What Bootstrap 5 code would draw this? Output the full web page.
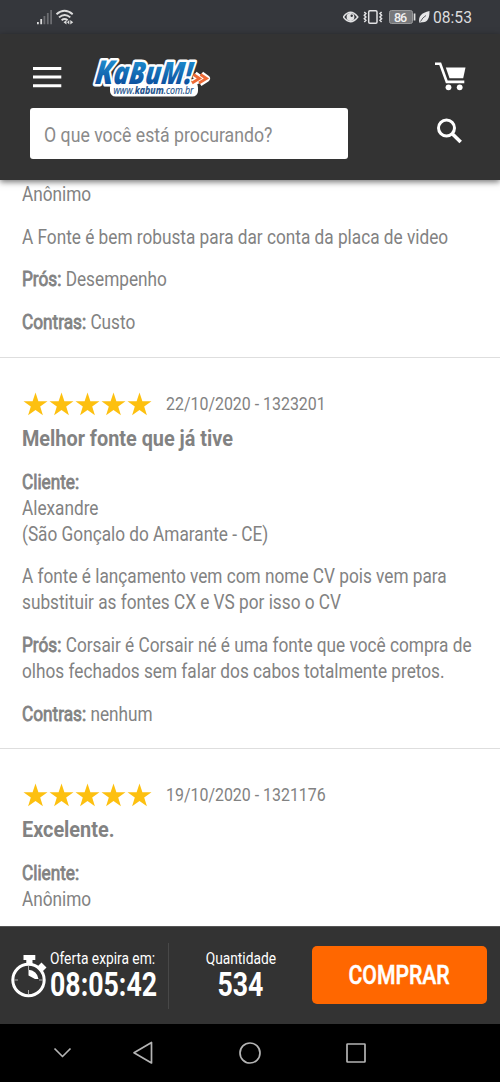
<!DOCTYPE html>
<html lang="pt-BR">
<head>
<meta charset="utf-8">
<meta name="viewport" content="width=device-width, initial-scale=1">
<title>KaBuM!</title>
<link href="https://cdn.jsdelivr.net/npm/bootstrap@5.3.0/dist/css/bootstrap.min.css" rel="stylesheet">
<style>
  body { height: 1082px; overflow: hidden; background: #fff; color: #828282; font: 400 20px/26px Roboto, sans-serif; }
  svg { display: block; flex: none; }
  /* narrow text: regular Roboto squeezed horizontally */
  .cond { display: block; white-space: nowrap; width: max-content; transform: scaleX(var(--k, .861)); transform-origin: 0 50%; }
  .cond-mid { transform-origin: 50% 50%; }
  .status-bar { height: 34px; background: #35373c; color: #dcdcde; padding: 0 29px 0 36px; }
  .clock { --k: .92; font-size: 17px; margin: 0 -4px 0 -2px; }
  .site-head { height: 146px; background: #333; padding: 20px 34px 0 30px; box-shadow: 0 2px 6px rgba(0,0,0,.55); z-index: 2; }
  .brand { margin: -10px 0 0 23px; }
  .find-row { margin-top: 6px; }
  .find-box { --k: .885; width: 318px; height: 51px; background: #fff; border-radius: 3px; padding: 2px 14px 0; color: #8a8a8a; }
  .reviews { height: 746px; overflow: hidden; }
  .review { padding: 33px 23px 21.500px 22px; border-bottom: 1px solid #dedede; }
  .review p { margin: 0 0 16.600px; }
  .review p:last-child { margin-bottom: 0; }
  .review b { font-weight: 400; -webkit-text-stroke: .8px #828282; }
  .review h2 { --k: .902; font-size: 22px; font-weight: 700; line-height: 28px; margin: 8.300px 0 15.900px; }
  .review-first { padding-top: 1.300px; }
  .stars { fill: #fdc010; }
  .date { font-size: 18.500px; margin-left: 13px; }
  .buy-bar { height: 98px; background: #333; color: #fff; border-top: 1px solid #555; }
  .offer { width: 169px; height: 66px; border-right: 1px solid #484848; padding-left: 10px; }
  .offer-text { margin-left: 2px; width: 106px; }
  .stock { width: 143px; }
  .tag-line { font-size: 16px; line-height: 22px; margin-top: -3px; }
  .big-num { --k: .81; font-size: 33px; line-height: 30px; font-weight: 700; }
  .buy-btn { --k: .815; width: 175px; height: 58px; background: #ff6700; border-radius: 5px; border: 0; color: #fff; font-size: 26px; font-weight: 500; padding: 0; -webkit-text-stroke: .5px #fff; margin-top: -1px; }
  .sys-nav { height: 58px; background: #000; }
</style>
</head>
<body class="d-flex flex-column">
<div class="status-bar d-flex align-items-center">
  <svg width="40" height="18" viewBox="36 8 40 18">
    <path fill="#ddd" d="M37 22h1.800v2.200H37zM40.300 19h1.800v5.200h-1.800z"/>
    <path fill="#6c6d71" d="M43.500 16h1.800v8.200h-1.800zM46.900 13h1.800v11.200h-1.800zM50.200 10h1.800v14.200h-1.800z"/>
    <g fill="none" stroke="#ddd" stroke-width="1.900"><path d="M56.500 14.300q8-7 16.200 0M59 17.400q5.700-5 11.300 0M61.600 20.200q3-2.400 6 0"/></g>
    <path fill="#ddd" d="M66.500 20v4.600l-3-2.300zM67 22.300l2.300-2.300v4.600zM70.300 20l2.900 2.300-2.900 2.300z"/>
  </svg>
  <svg class="ms-auto" width="92" height="18" viewBox="343 8 92 18">
    <path fill="none" stroke="#e2e2e4" stroke-width="1.500" d="M343.300 17q7.200-9.500 14.500 0q-7.300 9.500-14.500 0z"/>
    <circle cx="350.500" cy="17" r="3.900" fill="#e2e2e4"/><circle cx="351.700" cy="15.800" r="1.200" fill="#35373c"/>
    <rect x="368.700" y="10.700" width="8.300" height="12.600" rx="1.200" fill="none" stroke="#e2e2e4" stroke-width="1.500"/>
    <path fill="none" stroke="#e2e2e4" stroke-width="1.500" d="M364.300 12l1.600 1.600-1.600 1.700 1.600 1.700-1.600 1.700 1.600 1.600-1.600 1.700M381.600 12l-1.600 1.600 1.600 1.700-1.600 1.700 1.600 1.700-1.600 1.600 1.600 1.700"/>
    <rect x="389.500" y="10.500" width="23" height="13" rx="2" fill="#77787b" stroke="#98999b"/>
    <rect x="413.700" y="13.500" width="1.700" height="7" fill="#ddd"/>
    <text x="394" y="21.500" font-family="Roboto" font-weight="500" font-size="12.500" fill="#f2f2f2" textLength="13">86</text>
    <path fill="#e6e6e8" d="M429.500 11c.2 7-2 11.800-7.500 11.200l-2.600.6c-1.500-6 2-10.200 10.100-11.800z"/>
    <path stroke="#35373c" stroke-width=".8" fill="none" d="M420.500 21.500q2-4 5.500-6"/>
  </svg>
  <span class="cond clock">08:53</span>
</div>

<header class="site-head position-relative">
  <div class="d-flex align-items-start">
    <svg width="34" height="48" viewBox="30 54 34 48"><path fill="#fff" d="M33 67h28.300v3H33zM33 75.500h28.300v3H33zM33 84.200h28.300v3H33z"/></svg>
    <svg class="brand" width="125" height="58" viewBox="87 44 125 58">
      <defs><linearGradient id="blue" x1="0" y1="0" x2="0" y2="1"><stop offset=".2" stop-color="#1f92d2"/><stop offset=".8" stop-color="#0d519f"/></linearGradient></defs>
      <rect x="110" y="82" width="88" height="14.500" rx="5.500" fill="#fff"/>
      <g fill="none" stroke="#fff" stroke-width="7" stroke-linejoin="round"><path d="M194.500 74.500l5.500 4-7 4.500M201 74.500l5.500 4-7 4.500"/></g>
      <g transform="translate(94.500 83.500) skewX(-6)" font-family="Open Sans" font-weight="800" font-style="italic" stroke-linejoin="round">
        <text x="0" y="0" font-size="31" textLength="97" lengthAdjust="spacingAndGlyphs" fill="url(#blue)" stroke="#fff" stroke-width="5" paint-order="stroke"><tspan font-size="33">K</tspan>aBuM!</text>
      </g>
      <g fill="none" stroke="#ee6a35" stroke-width="2.800"><path d="M193.500 74.500l6 4-7.500 4.500M200.500 74.500l6 4-7.500 4.500"/></g>
      <text x="113.500" y="93.800" font-family="Open Sans" font-style="italic" font-size="10" fill="#20508a" stroke="#20508a" stroke-width=".15" textLength="80" lengthAdjust="spacingAndGlyphs">www.<tspan font-weight="700">kabum</tspan>.com.br</text>
    </svg>
    <svg class="ms-auto" width="34" height="40" viewBox="432 54 34 40">
      <path fill="none" stroke="#fff" stroke-width="2.600" d="M435 63.700h5.200l6.600 18.200h17.500"/>
      <path fill="#fff" d="M445.800 67.500h19.700l-2.300 10.800h-13.700z"/>
      <g fill="#fff"><circle cx="448.500" cy="87.300" r="2.900"/><circle cx="459.700" cy="87.300" r="2.900"/></g>
    </svg>
  </div>
  <div class="find-row d-flex">
    <div class="find-box d-flex align-items-center"><span class="cond">O que você está procurando?</span></div>
    <svg class="ms-auto" width="32" height="40" viewBox="434 107 32 40"><g fill="none" stroke="#fff" stroke-width="3"><circle cx="446.500" cy="127" r="8"/><path stroke-width="3.600" d="M452.500 133l8.200 8"/></g></svg>
  </div>
</header>

<main class="reviews">
  <article class="review review-first">
    <p><span class="cond">Anônimo</span></p>
    <p><span class="cond">A Fonte é bem robusta para dar conta da placa de video</span></p>
    <p><span class="cond"><b>Prós:</b> Desempenho</span></p>
    <p><span class="cond"><b>Contras:</b> Custo</span></p>
  </article>
  <article class="review">
    <div class="d-flex align-items-center">
      <svg class="stars" width="131" height="26" viewBox="0 0 131 26"><defs><path id="st" d="M0-12l2.900 8.700h9.100l-7.300 5.400 2.700 8.700-7.400-5.300-7.400 5.300 2.700-8.700-7.300-5.400h9.100z"/></defs><use href="#st" x="13.500" y="13.500"/><use href="#st" x="39.500" y="13.500"/><use href="#st" x="65.500" y="13.500"/><use href="#st" x="91.500" y="13.500"/><use href="#st" x="117.500" y="13.500"/></svg>
      <span class="cond date">22/10/2020 - 1323201</span>
    </div>
    <h2><span class="cond">Melhor fonte que já tive</span></h2>
    <p><span class="cond"><b>Cliente:</b><br>Alexandre<br>(São Gonçalo do Amarante - CE)</span></p>
    <p><span class="cond">A fonte é lançamento vem com nome CV pois vem para<br>substituir as fontes CX e VS por isso o CV</span></p>
    <p><span class="cond"><b>Prós:</b> Corsair é Corsair né é uma fonte que você compra de<br>olhos fechados sem falar dos cabos totalmente pretos.</span></p>
    <p><span class="cond"><b>Contras:</b> nenhum</span></p>
  </article>
  <article class="review">
    <div class="d-flex align-items-center">
      <svg class="stars" width="131" height="26" viewBox="0 0 131 26"><use href="#st" x="13.500" y="13.500"/><use href="#st" x="39.500" y="13.500"/><use href="#st" x="65.500" y="13.500"/><use href="#st" x="91.500" y="13.500"/><use href="#st" x="117.500" y="13.500"/></svg>
      <span class="cond date">19/10/2020 - 1321176</span>
    </div>
    <h2><span class="cond">Excelente.</span></h2>
    <p><span class="cond"><b>Cliente:</b><br>Anônimo</span></p>
  </article>
</main>

<footer>
  <div class="buy-bar d-flex align-items-center">
    <div class="offer d-flex align-items-center">
      <svg width="38" height="46" viewBox="10 952 38 46">
        <circle cx="28.500" cy="979" r="15.700" fill="none" stroke="#fff" stroke-width="3"/>
        <path fill="#fff" d="M23.500 954h11.800v5h-2.800v4h-6.200v-4h-2.800zM37.500 965.500l4-4 5 5-4 4zM28.500 968.800a10.200 10.200 0 0 1 10 9.200h-3.500l-6.500-3.500z"/>
        <path stroke="#aaa" d="M28.500 965v4M14 979h4M39 979h4M28.500 989v4"/>
      </svg>
      <div class="offer-text">
        <span class="cond tag-line">Oferta expira em:</span>
        <span class="cond big-num">08:05:42</span>
      </div>
    </div>
    <div class="stock d-flex flex-column align-items-center">
      <span class="cond cond-mid tag-line">Quantidade</span>
      <span class="cond cond-mid big-num">534</span>
    </div>
    <button class="buy-btn btn d-flex justify-content-center align-items-center"><span class="cond cond-mid">COMPRAR</span></button>
  </div>
  <nav class="sys-nav">
    <svg width="500" height="58" viewBox="0 1024 500 58" fill="none" stroke="#b4b4b4" stroke-width="1.700" stroke-linejoin="round">
      <path d="M54.500 1048.500l8 8 8-8M134 1052.800l17.500-10.300v20.500z"/><circle cx="250" cy="1053" r="10"/><rect x="347" y="1044" width="18" height="18" rx=".5"/>
    </svg>
  </nav>
</footer>
<script src="https://cdn.jsdelivr.net/npm/bootstrap@5.3.0/dist/js/bootstrap.bundle.min.js"></script>
</body>
</html>
